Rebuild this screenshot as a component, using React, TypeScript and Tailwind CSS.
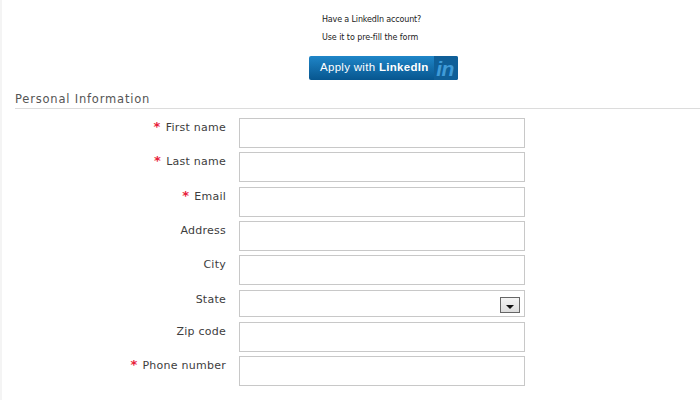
const fields = [
  { label: "First name", required: true, mt: "mt-[9px]" },
  { label: "Last name", required: true, mt: "mt-[4px]" },
  { label: "Email", required: true, mt: "mt-[5px]" },
  { label: "Address", required: false, mt: "mt-[4px]" },
  { label: "City", required: false, mt: "mt-[4px]" },
];

const lowerFields = [
  { label: "Zip code", required: false, mt: "mt-[5px]" },
  { label: "Phone number", required: true, mt: "mt-[4px]" },
];

function Label({ label, required }: { label: string; required: boolean }) {
  return (
    <div className="flex w-[224px] shrink-0 items-start justify-end gap-[5px] pt-[2px] text-[11px] leading-[16px] tracking-[0.25px] text-[#3d3d3d]">
      {required && <span className="text-[13px] font-bold leading-[13px] text-[#e8203a]">*</span>}
      <span>{label}</span>
    </div>
  );
}

function Row({ label, required, mt }: { label: string; required: boolean; mt: string }) {
  return (
    <div className={`flex gap-[13px] ${mt}`}>
      <Label label={label} required={required} />
      <div className="h-[30px] w-[286px] border border-[#c8c8c8] bg-white" />
    </div>
  );
}

export default function App() {
  return (
    <div className="h-[400px] w-[700px] overflow-hidden border-l-2 border-[#f4f4f4] bg-white font-['DejaVu_Sans',sans-serif]">
      <div className="flex flex-col items-start pl-[307px] pt-[15px]">
        <p className="ml-[13px] text-[8px] leading-[10px] tracking-[-0.15px] text-[#222]">Have a LinkedIn account?</p>
        <p className="ml-[13px] mt-[8px] text-[8px] leading-[10px] tracking-[-0.08px] text-[#222]">Use it to pre-fill the form</p>
        <div className="mt-[13px] flex h-[24px] w-[149px] items-center justify-between overflow-hidden rounded-[2px] bg-gradient-to-b from-[#1f86c8] to-[#07568f] pl-[11px] font-['Liberation_Sans',sans-serif] text-[11.5px] text-white">
          <span className="tracking-[0.3px]">
            Apply with <span className="font-bold">LinkedIn</span>
          </span>
          <span className="flex h-full w-[24px] items-center justify-center bg-[#0f5f98] pr-[2px] text-[21px] font-bold italic leading-none tracking-[-0.5px] text-[#3f9bd8]">
            in
          </span>
        </div>
      </div>
      <div className="ml-[13px] mt-[12px] border-b border-[#dcdcdc] pb-[1px] text-[11.5px] leading-[15px] tracking-[0.8px] text-[#555]">
        Personal Information
      </div>
      {fields.map((f) => (
        <Row key={f.label} {...f} />
      ))}
      <div className="mt-[5px] flex gap-[13px]">
        <Label label="State" required={false} />
        <div className="flex h-[27px] w-[286px] items-end justify-end border border-[#c8c8c8] bg-white pb-[3px] pr-[4px]">
          <div className="flex h-[16px] w-[20px] items-end justify-center border border-[#666] bg-gradient-to-b from-[#f4f4f4] to-[#dddddd] pb-[3px]">
            <svg width="8" height="4" viewBox="0 0 8 4">
              <path d="M0 0h8L4 4z" fill="#111" />
            </svg>
          </div>
        </div>
      </div>
      {lowerFields.map((f) => (
        <Row key={f.label} {...f} />
      ))}
    </div>
  );
}
